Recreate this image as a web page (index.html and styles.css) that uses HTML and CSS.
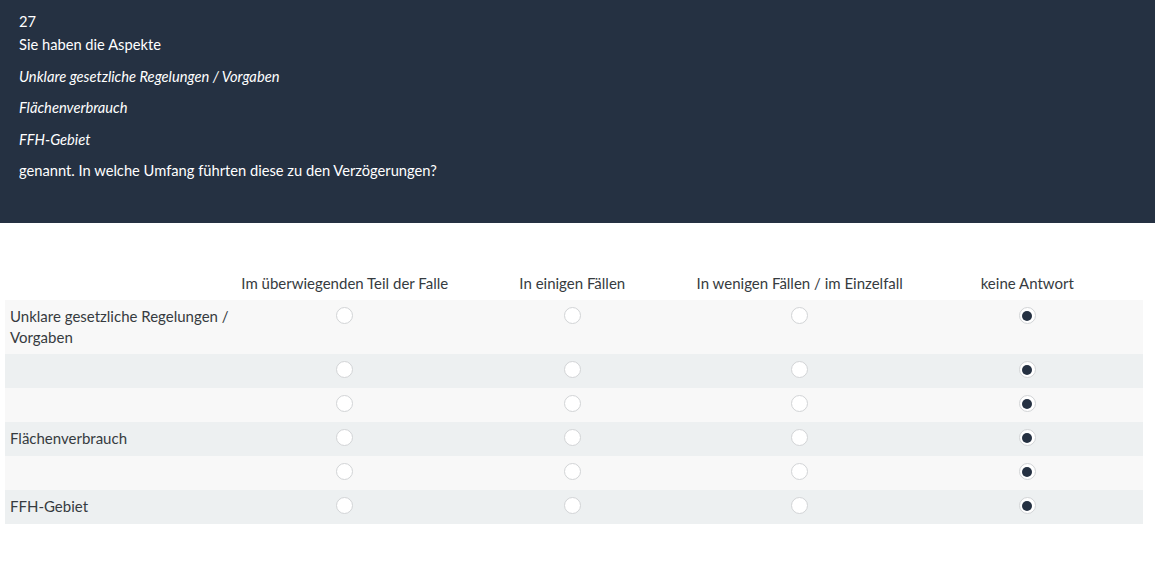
FILE: index.html
```html
<!DOCTYPE html>
<html lang="de">
<head>
<meta charset="utf-8">
<title>Frage 27</title>
<link rel="stylesheet" href="styles.css">
</head>
<body>
<header class="question">
  <div class="qnum">27</div>
  <p>Sie haben die Aspekte</p>
  <p><em>Unklare gesetzliche Regelungen / Vorgaben</em></p>
  <p><em>Flächenverbrauch</em></p>
  <p><em>FFH-Gebiet</em></p>
  <p>genannt. In welche Umfang führten diese zu den Verzögerungen?</p>
</header>
<main class="answers">
  <table class="matrix">
    <colgroup>
      <col class="c-label">
      <col class="c-opt"><col class="c-opt"><col class="c-opt"><col class="c-last">
    </colgroup>
    <thead>
      <tr>
        <th></th>
        <th>Im überwiegenden Teil der Falle</th>
        <th>In einigen Fällen</th>
        <th>In wenigen Fällen / im Einzelfall</th>
        <th class="last">keine Antwort</th>
      </tr>
    </thead>
    <tbody>
      <tr class="odd">
        <td class="label">Unklare gesetzliche Regelungen / Vorgaben</td>
        <td><span class="radio"></span></td><td><span class="radio"></span></td><td><span class="radio"></span></td><td class="last"><span class="radio checked"></span></td>
      </tr>
      <tr class="even">
        <td class="label"></td>
        <td><span class="radio"></span></td><td><span class="radio"></span></td><td><span class="radio"></span></td><td class="last"><span class="radio checked"></span></td>
      </tr>
      <tr class="odd">
        <td class="label"></td>
        <td><span class="radio"></span></td><td><span class="radio"></span></td><td><span class="radio"></span></td><td class="last"><span class="radio checked"></span></td>
      </tr>
      <tr class="even">
        <td class="label">Flächenverbrauch</td>
        <td><span class="radio"></span></td><td><span class="radio"></span></td><td><span class="radio"></span></td><td class="last"><span class="radio checked"></span></td>
      </tr>
      <tr class="odd">
        <td class="label"></td>
        <td><span class="radio"></span></td><td><span class="radio"></span></td><td><span class="radio"></span></td><td class="last"><span class="radio checked"></span></td>
      </tr>
      <tr class="even">
        <td class="label">FFH-Gebiet</td>
        <td><span class="radio"></span></td><td><span class="radio"></span></td><td><span class="radio"></span></td><td class="last"><span class="radio checked"></span></td>
      </tr>
    </tbody>
  </table>
</main>
</body>
</html>
```

FILE: styles.css
```css
* { box-sizing: border-box; }
html, body { margin: 0; padding: 0; background: #fff; }
body {
  font-family: Lato, "Open Sans", sans-serif;
  font-size: 15px;
  line-height: 21px;
  color: #363b40;
}
.question {
  background: #253142;
  color: #fff;
  height: 223px;
  padding: 11px 19px 0;
  font-size: 14.7px;
  line-height: 21.4px;
}
.qnum { margin-bottom: 1.5px; }
.question p { margin: 0 0 10.2px; }
.question em { font-style: italic; }

.answers { padding: 43px 12px 0 5px; }
.matrix {
  width: 1138px;
  border-collapse: collapse;
  table-layout: fixed;
}
.c-label { width: 226px; }
.c-opt { width: 227.5px; }
.c-last { width: 229.5px; }
.matrix th {
  font-weight: normal;
  text-align: center;
  padding: 7px 5px 6px;
  color: #363b40;
}
.matrix td {
  padding: 6px 5px;
  text-align: center;
  vertical-align: top;
}
.matrix th.last, .matrix td.last { padding-right: 7px; }
.matrix td.label { text-align: left; padding-right: 0; }
.matrix tr.odd td { background: #f8f8f8; }
.matrix tr.even td { background: #edf0f1; }

.radio {
  display: block;
  width: 17px;
  height: 17px;
  margin: 1px auto 4px;
  border: 1px solid #d2d4d6;
  border-radius: 50%;
  background: #fff;
  position: relative;
}
.radio.checked::after {
  content: "";
  position: absolute;
  left: 2.5px;
  top: 2.5px;
  width: 10px;
  height: 10px;
  border-radius: 50%;
  background: #253142;
}
```
